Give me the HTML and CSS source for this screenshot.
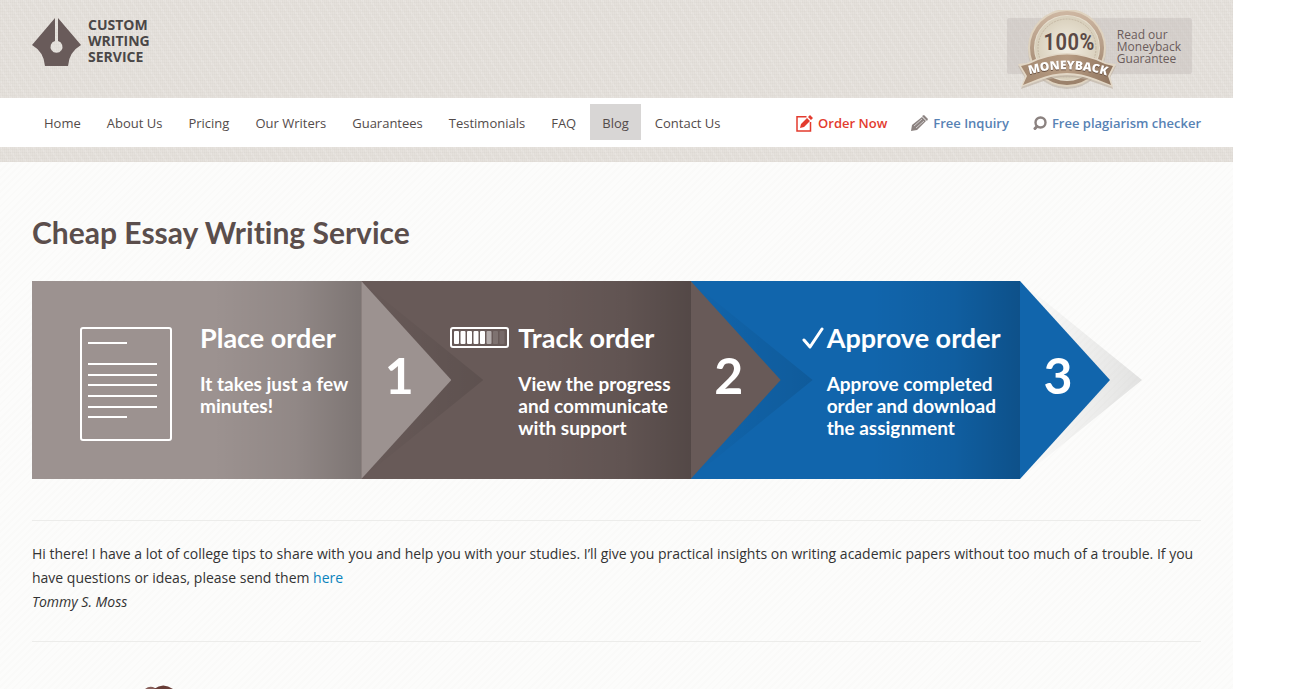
FILE: index.html
```html
<!DOCTYPE html>
<html lang="en">
<head>
<meta charset="utf-8">
<title>Cheap Essay Writing Service</title>
<link rel="stylesheet" href="styles.css">
</head>
<body>
<div class="page">
  <header class="header">
    <div class="masthead">
      <a class="logo" href="#">
        <svg class="logo-mark" viewBox="0 0 49 48" width="49" height="48" aria-hidden="true">
          <path fill="#695b5a" d="M23 0V23A6 6 0 1 0 26 23V0L49 27Q37 34 36 48H13Q12 34 0 27Z"/>
        </svg>
        <span class="logo-text">CUSTOM<br>WRITING<br>SERVICE</span>
      </a>
      <a class="guarantee" href="#">
        <svg class="badge" viewBox="0 0 98 82" width="98" height="82" role="img" aria-label="100% moneyback">
          <defs>
            <linearGradient id="ring" x1="0" y1="0" x2="0" y2="1"><stop offset="0" stop-color="#ceb7a2"/><stop offset="1" stop-color="#9a8069"/></linearGradient>
            <linearGradient id="ribbon" x1="0" y1="0" x2="1" y2="0"><stop offset="0" stop-color="#a48971"/><stop offset=".5" stop-color="#b79c83"/><stop offset="1" stop-color="#8e735d"/></linearGradient>
            <radialGradient id="face"><stop offset="0" stop-color="#f3eee3"/><stop offset="1" stop-color="#d8cfbb"/></radialGradient>
            <path id="arc" d="M6 66Q49 52 94 67"/>
          </defs>
          <circle cx="49" cy="40" r="39" fill="#bcb2a5" opacity=".6"/>
          <circle cx="49" cy="38" r="39" fill="#dfd3c0"/>
          <circle cx="49" cy="38" r="37" fill="url(#ring)"/>
          <circle cx="49" cy="38" r="33" fill="#e6dece"/>
          <circle cx="49" cy="38" r="32" fill="url(#face)"/>
          <circle cx="49" cy="38" r="29" fill="none" stroke="#c5b8a4" stroke-dasharray="2 1"/>
          <path fill="#baae9f" opacity=".6" d="M0 56L10 55Q49 35 88 55L98 56L92 68L95 79L78 73Q49 61 20 73L3 79L7 68Z"/>
          <path fill="#e2d7c6" d="M0 54L9 53Q49 33 89 53L98 54L92 66L95 77L78 71Q49 59 20 71L3 77L7 66Z"/>
          <path fill="url(#ribbon)" d="M3 56L11 54Q49 35 87 54L95 56L90 66L93 75L78 69Q49 57 20 69L5 75L9 66Z"/>
          <text class="badge-number" x="51" y="40" text-anchor="middle">100%</text>
          <text class="badge-label"><textPath href="#arc" startOffset="50%" text-anchor="middle">MONEYBACK</textPath></text>
        </svg>
        <span class="guarantee-text">Read our<br>Moneyback<br>Guarantee</span>
      </a>
    </div>
    <div class="navbar">
      <nav class="menu" aria-label="Main">
        <a href="#">Home</a>
        <a href="#">About Us</a>
        <a href="#">Pricing</a>
        <a href="#">Our Writers</a>
        <a href="#">Guarantees</a>
        <a href="#">Testimonials</a>
        <a href="#">FAQ</a>
        <a class="active" href="#">Blog</a>
        <a href="#">Contact Us</a>
      </nav>
      <div class="actions">
        <a class="order" href="#">
          <svg viewBox="0 0 17 17" width="17" height="17" aria-hidden="true">
            <path fill="none" stroke="#e33b2e" stroke-width="1.5" d="M10.500 1.750H1V16H14.500V7"/>
            <path fill="#e33b2e" d="M4 13L5 9L11 3L14 6L8 12ZM12 2L14 0L17 3L15 5Z"/>
          </svg>Order Now</a>
        <a href="#">
          <svg viewBox="0 0 17 17" width="17" height="17" aria-hidden="true">
            <path fill="#8b8280" d="M0 16L1 10L11 2L15 6L6 15ZM11 1L13 0L17 4L16 6Z"/>
            <path stroke="#fff" stroke-width=".6" d="M3 11L11 4M5 13L13 6"/>
          </svg>Free Inquiry</a>
        <a href="#">
          <svg viewBox="0 0 14 15" width="14" height="15" aria-hidden="true">
            <circle cx="7.500" cy="6.500" r="5" fill="none" stroke="#8b8280" stroke-width="2.400"/>
            <path stroke="#8b8280" stroke-width="3" stroke-linecap="round" d="M4 10.500L2 12.500"/>
          </svg>Free plagiarism checker</a>
      </div>
    </div>
  </header>
  <main class="content">
    <h1>Cheap Essay Writing Service</h1>
    <ol class="steps">
      <li class="step step-place">
        <svg class="sheet" viewBox="0 0 92 114" width="92" height="114" fill="none" stroke="#fff" stroke-width="2" aria-hidden="true">
          <rect x="1" y="1" width="90" height="112" rx="2"/>
          <path d="M8 16H47M8 37H77M8 48H77M8 58H77M8 69H77M8 80H77M8 90H47"/>
        </svg>
        <div class="step-text">
          <h2>Place order</h2>
          <p>It takes just a few<br>minutes!</p>
        </div>
        <div class="arrow"><span>1</span></div>
      </li>
      <li class="step step-track">
        <svg class="mark" viewBox="0 0 59 21" width="59" height="21" aria-hidden="true">
          <rect x="1" y="1" width="57" height="19" rx="2" fill="none" stroke="#fff" stroke-width="2"/>
          <g fill="#fff">
            <rect x="4" y="4" width="5" height="13" rx="1"/><rect x="10.500" y="4" width="5" height="13" rx="1"/><rect x="17" y="4" width="5" height="13" rx="1"/><rect x="23.500" y="4" width="5" height="13" rx="1"/><rect x="30" y="4" width="5" height="13" rx="1"/>
            <rect x="36.500" y="4" width="5" height="13" rx="1" opacity=".5"/><rect x="43" y="4" width="5" height="13" rx="1" opacity=".15"/><rect x="49.500" y="4" width="5" height="13" rx="1" opacity=".1"/>
          </g>
        </svg>
        <div class="step-text">
          <h2>Track order</h2>
          <p>View the progress<br>and communicate<br>with support</p>
        </div>
        <div class="arrow"><span>2</span></div>
      </li>
      <li class="step step-approve">
        <svg class="mark" viewBox="0 0 22 23" width="22" height="23" aria-hidden="true">
          <path fill="none" stroke="#fff" stroke-width="3" stroke-linecap="round" stroke-linejoin="round" d="M2 13L8 20L20 2"/>
        </svg>
        <div class="step-text">
          <h2>Approve order</h2>
          <p>Approve completed<br>order and download<br>the assignment</p>
        </div>
        <div class="arrow"><span>3</span></div>
      </li>
    </ol>
    <section class="intro">
      <p>Hi there! I have a lot of college tips to share with you and help you with your studies. I’ll give you practical insights on writing academic papers without too much of a trouble. If you have questions or ideas, please send them <a href="#">here</a></p>
      <p><em>Tommy S. Moss</em></p>
    </section>
    <svg class="portrait" viewBox="0 0 30 4" width="30" height="4" aria-hidden="true">
      <path fill="#875e59" d="M0 4Q5 0 10 3L13 4Z"/><path fill="#683c36" d="M9 4Q18-3 28 4Z"/>
    </svg>
  </main>
</div>
</body>
</html>
```
FILE: styles.css
```css
* { box-sizing: border-box; }
body {
  margin: 0;
  padding-right: 63px;
  background: #fff;
  color: #333;
  font: 14px/24px "Open Sans", "Noto Sans", sans-serif;
}
a { color: #0b83bd; text-decoration: none; }
h1, h2, p, ol { margin: 0; padding: 0; }
svg { display: block; flex: none; }

.page {
  min-height: 100vh;
  background:
    repeating-linear-gradient(135deg, rgba(90, 80, 60, .012) 0 2px, transparent 2px 5px),
    #fcfcfb;
}
.header {
  padding-bottom: 15px;
  background:
    repeating-linear-gradient(0deg, rgba(120, 110, 100, .03) 0 1px, transparent 1px 3px),
    repeating-linear-gradient(90deg, rgba(120, 110, 100, .03) 0 1px, transparent 1px 2px),
    repeating-linear-gradient(58deg, rgba(255, 255, 255, .1) 0 2px, transparent 2px 7px),
    #e5e1dc;
}
.masthead {
  display: flex;
  justify-content: space-between;
  align-items: flex-start;
  height: 98px;
  padding: 18px 41px 0 32px;
}
.logo { display: flex; align-items: flex-start; gap: 7px; }
.logo-text {
  margin-top: -1px;
  color: #4a4747;
  font-size: 14px;
  font-weight: 700;
  line-height: 16px;
}
.guarantee {
  position: relative;
  display: flex;
  align-items: center;
  height: 56px;
  padding: 2px 11px 0 110px;
  border-radius: 2px;
  background: rgba(190, 183, 180, .4);
}
.badge { position: absolute; left: 11px; top: -8px; }
.badge-number {
  fill: #5b4946;
  font: 500 24px "Roboto Condensed", "Open Sans Condensed", Roboto, sans-serif;
}
.badge-label {
  fill: #fff;
  font: 800 12px "Open Sans", sans-serif;
  filter: drop-shadow(0 1px 0 #6b5444);
}
.guarantee-text { color: #6b5c5b; font-size: 12px; line-height: 12px; }

.navbar {
  display: flex;
  justify-content: space-between;
  padding: 6px 32px;
  background: #fff;
  font-size: 13px;
  line-height: 36px;
}
.menu { display: flex; gap: 2px; }
.menu a { padding: 1px 12px 0; height: 36px; color: #534b4a; }
.menu .active { background: #d8d6d5; }
.actions { display: flex; gap: 24px; padding-top: 1px; }
.actions a {
  display: flex;
  align-items: center;
  gap: 5px;
  height: 36px;
  color: #5782b4;
  font-weight: 600;
}
.actions .order { color: #e33b2e; }

.content { padding: 50px 32px 0; }
h1 {
  color: #5b4e4c;
  font: 700 30px/40px Lato, sans-serif;
  font-variant-ligatures: none;
}
.steps {
  display: grid;
  grid-template-columns: repeat(3, minmax(0, 1fr));
  max-width: 988px;
  margin-top: 29px;
  color: #fff;
  font-family: Lato, sans-serif;
  list-style: none;
}
.step {
  position: relative;
  display: flex;
  align-items: flex-start;
  height: 198px;
  background: linear-gradient(90deg, transparent 55%, rgba(0, 0, 0, .07) 80%, rgba(0, 0, 0, .2)) var(--tone);
}
.step-place { --tone: #9c9290; z-index: 3; padding: 46px 0 0 48px; gap: 28px; }
.step-track { --tone: #685a58; z-index: 2; padding: 46px 0 0 89px; gap: 9px; }
.step-approve { --tone: #1165ac; z-index: 1; padding: 46px 0 0 111px; gap: 3px; }
.step-text { flex: none; }
.step h2 { margin-top: -6px; font-size: 27px; font-weight: 700; line-height: 34px; }
.step p { margin-top: 18px; font-size: 19px; font-weight: 700; line-height: 22px; }
.arrow {
  position: absolute;
  z-index: 1;
  top: 0;
  left: 100%;
  width: 90px;
  height: 198px;
  padding-right: 14px;
  background: var(--tone);
  clip-path: polygon(0 0, 100% 50%, 0 100%);
  font-size: 50px;
  font-weight: 700;
  line-height: 188px;
  text-align: center;
}
.step::after {
  content: "";
  position: absolute;
  top: 0;
  left: 100%;
  width: 122px;
  height: 198px;
  background: linear-gradient(90deg, transparent, rgba(0, 0, 0, .1));
  clip-path: polygon(0 0, 100% 50%, 0 100%);
}

.intro {
  margin-top: 41px;
  padding: 21px 0 27px;
  border: solid #ececea;
  border-width: 1px 0;
}
.portrait { margin: 43px 0 0 113px; }
```
